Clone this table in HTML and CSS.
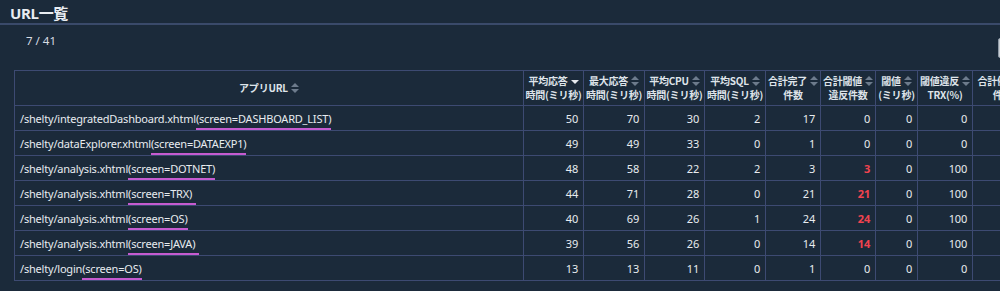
FILE: index.html
```html
<!DOCTYPE html>
<html lang="ja">
<head>
<meta charset="utf-8">
<title>URL一覧</title>
<link rel="stylesheet" href="styles.css">
</head>
<body>
<div class="page">
  <h1 class="title">URL一覧</h1>
  <div class="toolbar">
    <span class="pager">7 / 41</span>
    <button class="tool-btn" type="button" aria-label="エクスポート"></button>
  </div>
  <div class="table-wrap">
    <table class="grid">
      <colgroup>
        <col class="c-url"><col class="c60"><col class="c61"><col class="c60"><col class="c61"><col class="c55"><col class="c55"><col class="c42"><col class="c55"><col class="c60"><col class="c60">
      </colgroup>
      <thead>
        <tr>
          <th class="h-url">アプリURL<span class="sort"></span></th>
          <th>平均応答<span class="sort-down"></span><br>時間(ミリ秒)</th>
          <th>最大応答<span class="sort"></span><br>時間(ミリ秒)</th>
          <th>平均CPU<span class="sort"></span><br>時間(ミリ秒)</th>
          <th>平均SQL<span class="sort"></span><br>時間(ミリ秒)</th>
          <th>合計完了<span class="sort"></span><br>件数</th>
          <th>合計閾値<span class="sort"></span><br>違反件数</th>
          <th>閾値<span class="sort"></span><br>(ミリ秒)</th>
          <th>閾値違反<span class="sort"></span><br>TRX(%)</th>
          <th>合計例外<span class="sort"></span><br>件数</th>
          <th>合計<span class="sort"></span><br>件数</th>
        </tr>
      </thead>
      <tbody>
        <tr><td class="url">/shelty/integratedDashboard.xhtml<span class="scr">(screen=DASHBOARD_LIST)</span></td><td>50</td><td>70</td><td>30</td><td>2</td><td>17</td><td>0</td><td>0</td><td>0</td><td></td><td></td></tr>
        <tr><td class="url">/shelty/dataExplorer.xhtml<span class="scr">(screen=DATAEXP1)</span></td><td>49</td><td>49</td><td>33</td><td>0</td><td>1</td><td>0</td><td>0</td><td>0</td><td></td><td></td></tr>
        <tr><td class="url">/shelty/analysis.xhtml<span class="scr">(screen=DOTNET)</span></td><td>48</td><td>58</td><td>22</td><td>2</td><td>3</td><td class="alert">3</td><td>0</td><td>100</td><td></td><td></td></tr>
        <tr><td class="url">/shelty/analysis.xhtml<span class="scr ext">(screen=TRX)</span></td><td>44</td><td>71</td><td>28</td><td>0</td><td>21</td><td class="alert">21</td><td>0</td><td>100</td><td></td><td></td></tr>
        <tr><td class="url">/shelty/analysis.xhtml<span class="scr">(screen=OS)</span></td><td>40</td><td>69</td><td>26</td><td>1</td><td>24</td><td class="alert">24</td><td>0</td><td>100</td><td></td><td></td></tr>
        <tr><td class="url">/shelty/analysis.xhtml<span class="scr ext">(screen=JAVA)</span></td><td>39</td><td>56</td><td>26</td><td>0</td><td>14</td><td class="alert">14</td><td>0</td><td>100</td><td></td><td></td></tr>
        <tr><td class="url">/shelty/login<span class="scr">(screen=OS)</span></td><td>13</td><td>13</td><td>11</td><td>0</td><td>1</td><td>0</td><td>0</td><td>0</td><td></td><td></td></tr>
      </tbody>
    </table>
  </div>
</div>
</body>
</html>
```

FILE: styles.css
```css
html, body {
  margin: 0;
  padding: 0;
  background: #1b2a3a;
  overflow: hidden;
}
body {
  font-family: "Noto Sans", "Noto Sans CJK JP", sans-serif;
  color: #e6eaef;
}
.page {
  width: 1100px;
}
.title {
  margin: 0;
  padding: 3px 10px 0;
  font-size: 15px;
  line-height: 20px;
  font-weight: 700;
  font-family: "Noto Sans", "Noto Sans CJK JP", sans-serif;
  letter-spacing: -0.3px;
  color: #e9edf2;
  border-bottom: 2px solid #3a4a6a;
}
.toolbar {
  display: flex;
  align-items: flex-start;
  width: 1060px;
  height: 45px;
}
.pager {
  margin: 8px 0 0 26px;
  font-size: 11.5px;
  line-height: 16px;
  color: #d8dde4;
}
.tool-btn {
  margin: 13px 0 0 auto;
  width: 62px;
  height: 20px;
  border: 1px solid #8f9aa6;
  border-radius: 2px;
  background: #c9ced4;
  padding: 0;
}
.table-wrap {
  margin-left: 14px;
}
.grid {
  border-collapse: collapse;
  table-layout: fixed;
  width: 1078px;
}
.c-url { width: 509px; }
.c60 { width: 60px; }
.c61 { width: 61px; }
.c55 { width: 55px; }
.c42 { width: 42px; }
.grid th, .grid td {
  border: 1px solid #3d4a72;
  padding: 0;
  overflow: hidden;
  white-space: nowrap;
}
.grid th {
  height: 34px;
  font-family: "Noto Sans CJK JP", sans-serif;
  font-size: 10px;
  line-height: 14px;
  font-weight: 700;
  letter-spacing: -0.2px;
  color: #dfe4ea;
  text-align: center;
  vertical-align: middle;
}
.grid td {
  height: 19px;
  font-size: 11px;
  line-height: 15px;
  letter-spacing: -0.2px;
  text-align: right;
  padding-right: 5px;
  padding-top: 5px;
  color: #e8ecf0;
  vertical-align: top;
}
.grid td.url {
  text-align: left;
  padding-left: 5px;
  padding-right: 0;
}
.scr {
  display: inline-block;
  vertical-align: top;
  line-height: 15px;
  border-bottom: 2px solid #c65bd0;
  padding-bottom: 2px;
  margin-bottom: -4px;
}
.scr.ext {
  padding-right: 4px;
}
.alert {
  color: #f0434f !important;
  font-weight: 700;
}
.sort, .sort-down {
  display: inline-block;
  position: relative;
  width: 8px;
  height: 10px;
  margin-left: 3px;
  vertical-align: -1px;
}
.sort::before, .sort::after {
  content: "";
  position: absolute;
  left: 0;
  border-left: 4px solid transparent;
  border-right: 4px solid transparent;
}
.sort::before {
  top: 0;
  border-bottom: 4px solid #6d7b8c;
}
.sort::after {
  bottom: 0;
  border-top: 4px solid #6d7b8c;
}
.sort-down::after {
  content: "";
  position: absolute;
  left: 0;
  top: 4px;
  border-left: 4px solid transparent;
  border-right: 4px solid transparent;
  border-top: 4px solid #e6eaef;
}
```
